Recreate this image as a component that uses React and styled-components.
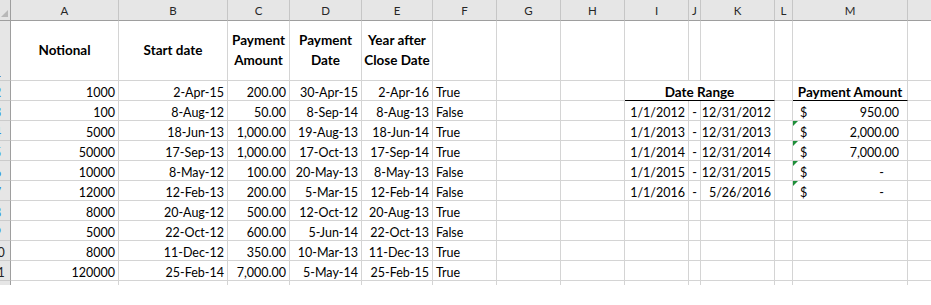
import styled, { createGlobalStyle, css } from "styled-components";

const GlobalStyle = createGlobalStyle`
  html, body {
    margin: 0;
    padding: 0;
    background: #ffffff;
  }
  body {
    font-family: Lato, "Open Sans", sans-serif;
    color: #000;
  }
`;

// column letters and pixel widths (each width includes the 1px grid line)
const COLUMNS = [
  ["A", 108],
  ["B", 109],
  ["C", 62],
  ["D", 72],
  ["E", 71],
  ["F", 64],
  ["G", 64],
  ["H", 64],
  ["I", 64],
  ["J", 12],
  ["K", 74],
  ["L", 18],
  ["M", 115],
  ["N", 64],
];

const trades = [
  ["1000", "2-Apr-15", "200.00", "30-Apr-15", "2-Apr-16", "True"],
  ["100", "8-Aug-12", "50.00", "8-Sep-14", "8-Aug-13", "False"],
  ["5000", "18-Jun-13", "1,000.00", "19-Aug-13", "18-Jun-14", "True"],
  ["50000", "17-Sep-13", "1,000.00", "17-Oct-13", "17-Sep-14", "True"],
  ["10000", "8-May-12", "100.00", "20-May-13", "8-May-13", "False"],
  ["12000", "12-Feb-13", "200.00", "5-Mar-15", "12-Feb-14", "False"],
  ["8000", "20-Aug-12", "500.00", "12-Oct-12", "20-Aug-13", "True"],
  ["5000", "22-Oct-12", "600.00", "5-Jun-14", "22-Oct-13", "False"],
  ["8000", "11-Dec-12", "350.00", "10-Mar-13", "11-Dec-13", "True"],
  ["120000", "25-Feb-14", "7,000.00", "5-May-14", "25-Feb-15", "True"],
];

// summary table, starts one row below "Date Range"
const summary = [
  { from: "1/1/2012", to: "12/31/2012", amount: "950.00", flag: false },
  { from: "1/1/2013", to: "12/31/2013", amount: "2,000.00", flag: true },
  { from: "1/1/2014", to: "12/31/2014", amount: "7,000.00", flag: true },
  { from: "1/1/2015", to: "12/31/2015", amount: null, flag: true },
  { from: "1/1/2016", to: "5/26/2016", amount: null, flag: true },
];

const Viewport = styled.div`
  height: 285px;
  overflow: hidden;
`;

const Sheet = styled.div`
  display: grid;
  grid-template-columns: 11px ${COLUMNS.map(([, w]) => `${w}px`).join(" ")};
  grid-template-rows: 21px 60px repeat(11, 20px);
  font-size: 12.5px;
  line-height: 15px;
`;

const Corner = styled.div`
  display: flex;
  align-items: flex-end;
  justify-content: flex-end;
  padding: 0 2px 3px 0;
  background: #e4e4e4;
  border-right: 1px solid #9e9e9e;
  border-bottom: 1px solid #9e9e9e;

  &::after {
    content: "";
    width: 0;
    height: 0;
    border-left: 7px solid transparent;
    border-bottom: 7px solid #b8b8b8;
  }
`;

const ColHead = styled.div`
  display: flex;
  align-items: center;
  justify-content: center;
  background: #e6e6e6;
  border-right: 1px solid #c6c6c6;
  border-bottom: 1px solid #9e9e9e;
  color: #262626;
  font-size: 11.5px;
`;

const RowHead = styled.div`
  display: flex;
  align-items: flex-end;
  justify-content: flex-end;
  overflow: hidden;
  background: #e6e6e6;
  border-right: 1px solid #9e9e9e;
  border-bottom: 1px solid #cbcbcb;
  color: ${(p) => (p.$active ? "#2f86dc" : "#222")};

  span {
    flex: none;
    width: 25px;
    text-align: center;
  }
`;

const alignments = {
  left: "flex-start",
  right: "flex-end",
  center: "center",
};

const Cell = styled.div`
  position: relative;
  display: flex;
  align-items: flex-end;
  justify-content: ${(p) => alignments[p.$align || "left"]};
  padding: 0 3px;
  white-space: nowrap;
  border-right: 1px solid #d4d4d4;
  border-bottom: 1px solid ${(p) => (p.$underline ? "#000" : "#d4d4d4")};
  font-weight: ${(p) => (p.$bold ? 700 : 400)};
  ${(p) => p.$bold && css`font-size: 13.5px;`}
  ${(p) => p.$span && css`grid-column: span ${p.$span};`}
`;

const HeadCell = styled.div`
  display: flex;
  align-items: center;
  justify-content: center;
  text-align: center;
  font-weight: 700;
  font-size: 13.5px;
  line-height: 20px;
  padding-bottom: 2px;
  border-right: 1px solid #d4d4d4;
  border-bottom: 1px solid #d4d4d4;
`;

// accounting format: "$" hugs the left, figure sits right
const Money = styled(Cell)`
  justify-content: space-between;
  padding: 0 ${(p) => (p.$dash ? "23px" : "8px")} 0 7px;

  ${(p) =>
    p.$flag &&
    css`
      &::before {
        content: "";
        position: absolute;
        top: 0;
        left: 0;
        border-top: 5px solid #1f8f3a;
        border-right: 5px solid transparent;
      }
    `}
`;

const headers = [
  "Notional",
  "Start date",
  ["Payment", "Amount"],
  ["Payment", "Date"],
  ["Year after", "Close Date"],
];

function HeaderRow() {
  return (
    <>
      <RowHead>
        <span>1</span>
      </RowHead>
      {COLUMNS.map(([key], i) => {
        const label = headers[i];
        if (!label) return <HeadCell key={key} />;
        return (
          <HeadCell key={key}>
            {Array.isArray(label) ? (
              <div>
                {label[0]}
                <br />
                {label[1]}
              </div>
            ) : (
              label
            )}
          </HeadCell>
        );
      })}
    </>
  );
}

function SummaryCells({ index }) {
  if (index === 0) {
    return (
      <>
        <Cell $span={3} $align="center" $bold $underline>
          Date Range
        </Cell>
        <Cell />
        <Cell $align="center" $bold $underline>
          Payment Amount
        </Cell>
      </>
    );
  }
  const item = summary[index - 1];
  if (!item) {
    return (
      <>
        <Cell />
        <Cell />
        <Cell />
        <Cell />
        <Cell />
      </>
    );
  }
  return (
    <>
      <Cell $align="right">{item.from}</Cell>
      <Cell $align="center">-</Cell>
      <Cell $align="right">{item.to}</Cell>
      <Cell />
      <Money $flag={item.flag} $dash={!item.amount}>
        <span>$</span>
        <span>{item.amount || "-"}</span>
      </Money>
    </>
  );
}

function DataRow({ row, index }) {
  const n = index + 2;
  return (
    <>
      <RowHead $active={n <= 9}>
        <span>{n}</span>
      </RowHead>
      {row ? (
        <>
          <Cell $align="right">{row[0]}</Cell>
          <Cell $align="right">{row[1]}</Cell>
          <Cell $align="right">{row[2]}</Cell>
          <Cell $align="right">{row[3]}</Cell>
          <Cell $align="right">{row[4]}</Cell>
          <Cell>{row[5]}</Cell>
        </>
      ) : (
        <>
          <Cell />
          <Cell />
          <Cell />
          <Cell />
          <Cell />
          <Cell />
        </>
      )}
      <Cell />
      <Cell />
      <SummaryCells index={index} />
      <Cell />
    </>
  );
}

export default function App() {
  const rows = [...trades, null];
  return (
    <>
      <GlobalStyle />
      <Viewport>
        <Sheet>
          <Corner />
          {COLUMNS.map(([key]) => (
            <ColHead key={key}>{key}</ColHead>
          ))}
          <HeaderRow />
          {rows.map((row, i) => (
            <DataRow key={i} row={row} index={i} />
          ))}
        </Sheet>
      </Viewport>
    </>
  );
}
